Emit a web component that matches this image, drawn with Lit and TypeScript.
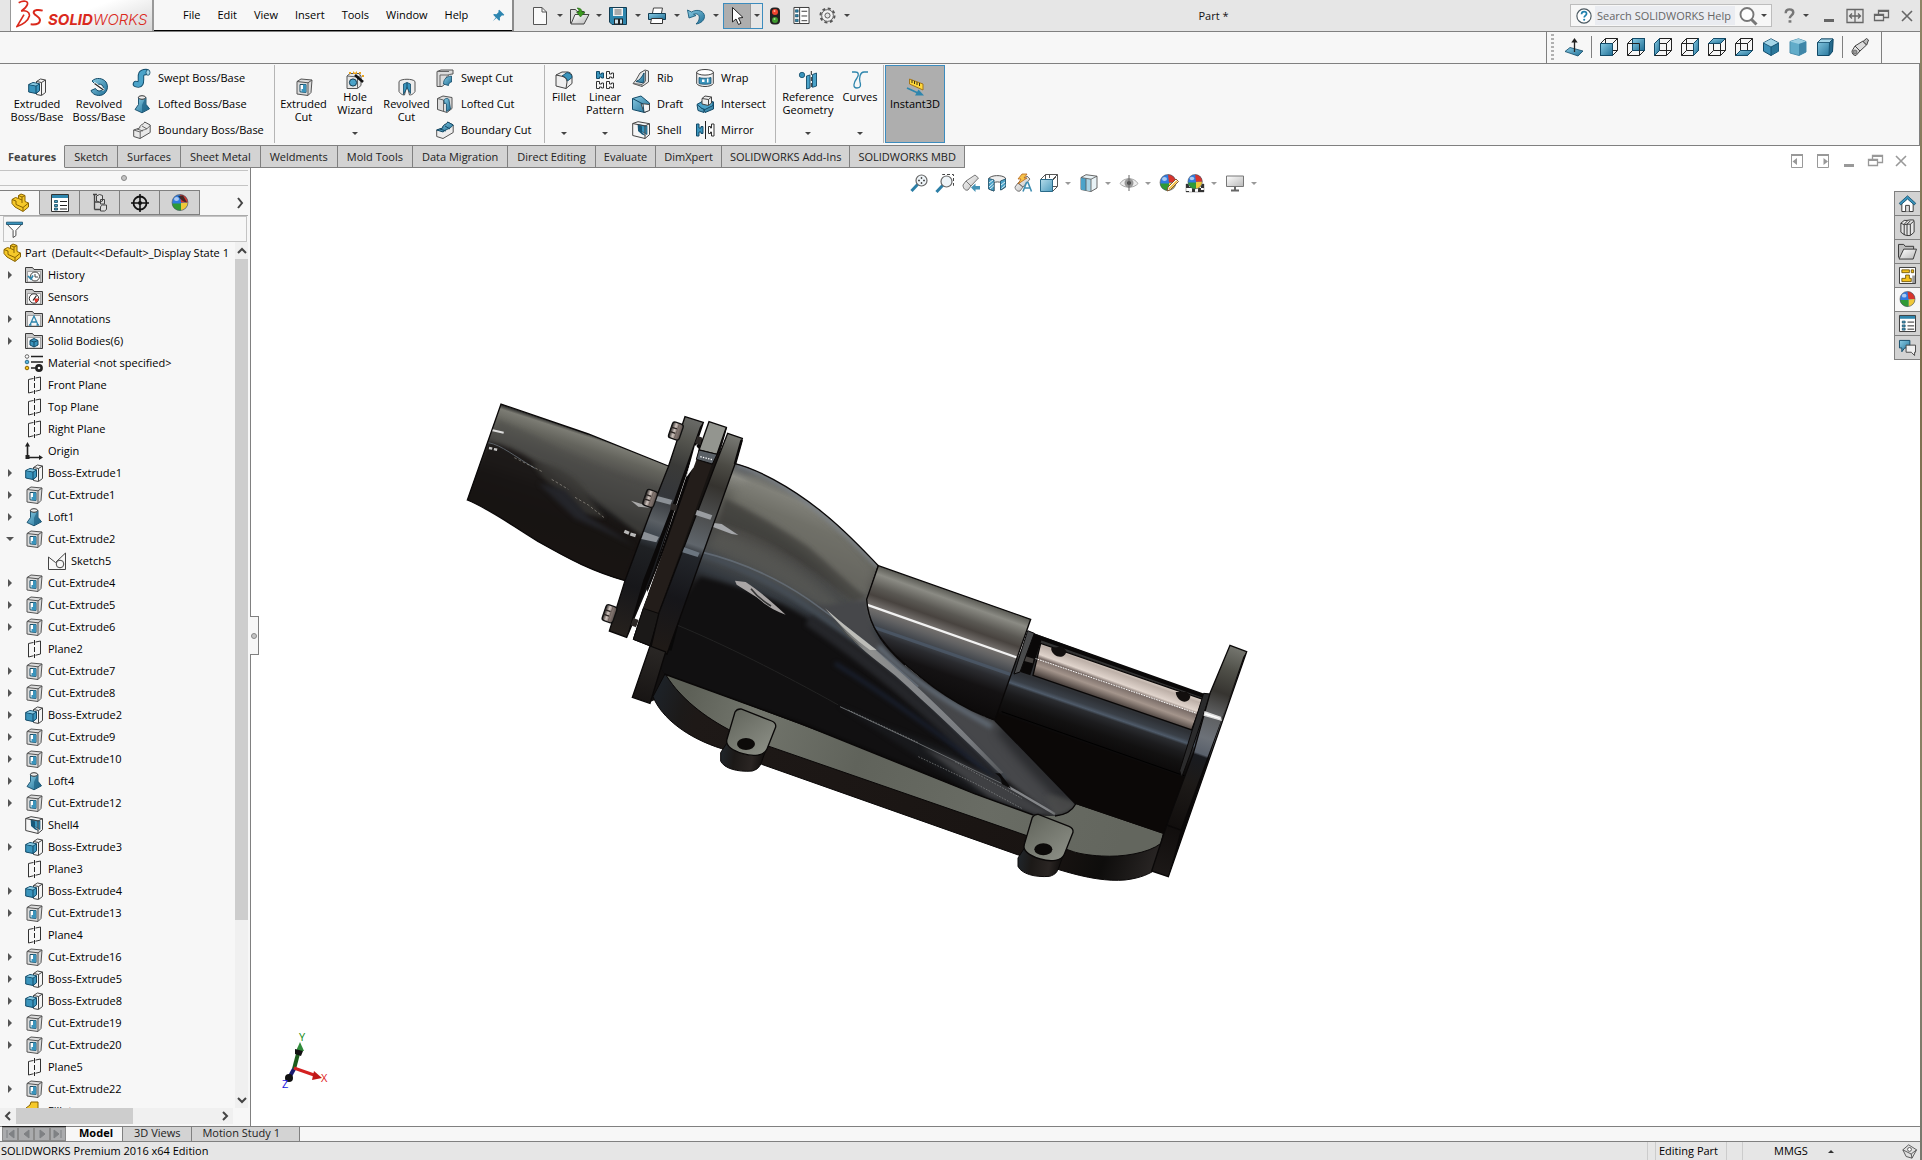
import { LitElement, html, svg, css, TemplateResult } from "lit";
import { customElement } from "lit/decorators.js";
import { classMap } from "lit/directives/class-map.js";

/* ---------- icons (18 x 18 grid) ---------- */

const cube = (face: unknown) => svg`
  <g fill="none" stroke="#222">
    <path d="M5.5 .5h12v12h-12zM.5 5.5h12v12h-12zM.5 5.5l5-5M12.5 5.5l5-5M.5 17.5l5-5M12.5 17.5l5-5"/>
  </g>${face}`;

const ball = svg`
  <circle cx="9" cy="8.5" r="8" fill="#2f7be0"/>
  <path d="M9 .5a8 8 0 0 1 8 8H10z" fill="#d8342c"/>
  <path d="M17 8.5a8 8 0 0 1-7 8V9z" fill="#f0c83a"/>
  <path d="M1 9.500h9v7a8 8 0 0 1-9-7z" fill="#2f9a36"/>
  <ellipse cx="5.500" cy="5" rx="2.500" ry="2" fill="#fff" opacity=".6"/>
  <circle cx="9" cy="8.500" r="8" fill="none" stroke="#555" stroke-width=".6"/>`;

const folder = svg`<path d="M.5 16.500v-15h7l1.500 2h8.500v13z" fill="#c9c9c9" stroke="#3c3c3c"/><path d="M2.500 16V5.500h13V16z" fill="#f6f6f6" stroke="#777" stroke-width=".6"/>`;
const lens = svg`<path d="M8 10l-6.500 7" stroke="#2b7ea6" stroke-width="3"/><circle cx="11.500" cy="6.500" r="5.500" fill="#eef4f8" stroke="#666" stroke-width="1.200"/>`;
const list = svg`<path d="M.5 .5h17v17H.5z" fill="#fff" stroke="#333"/><path d="M1 1h16v3H1z" fill="#2f86ad"/><path d="M3.500 6.500h3v2h-3zM3.500 10.500h3v2h-3zM3.500 14h3v2h-3z" fill="#4ba3c7" stroke="#134660" stroke-width=".8"/><path d="M9 7.500h7M9 11.500h7M9 15h7" stroke="#222"/>`;

const icons: Record<string, unknown> = {
  pin: svg`<path d="M10 1l7 7-1.500 1.200-1.600-.4-3 3 .2 3.400-1.200 1.200-3.800-3.800L1 17l4.200-5.200L1.600 8l1.300-1 3.300.1 3-3L8.700 2.300z" fill="#2e86b0"/>`,
  doc: svg`<path d="M2.500 .5h8.500l4.500 4.500v12.500h-13z" fill="#fafafa" stroke="#555"/><path d="M11 .5v4.500h4.500" fill="none" stroke="#555"/>`,
  open: svg`<path d="M.5 16.500v-14h5l1.500 2h7v3" fill="#ddd" stroke="#444"/><path d="M1 17L5 7.500h14L14 17z" fill="url(#w)" stroke="#444"/><path d="M7 1c4 0 5 2 5 4h3l-4.500 5L6.500 5h2.500C9 3 8.500 2 7 1z" fill="#3c9a1e" stroke="#1d5c10" stroke-width=".5"/>`,
  save: svg`<path d="M.5 .5h17v17H3l-2.500-2.500z" fill="#2f86ad" stroke="#123c52"/><path d="M4 1h10v8H4z" fill="#f2f2f2"/><path d="M5.500 3h7M5.500 5h7M5.500 7h7" stroke="#666"/><path d="M5 11.500h9v6H5z" fill="#222"/><path d="M6 12.500h3v4H6zM11 12.500h2v4h-2z" fill="#cfe4ee"/>`,
  print: svg`<path d="M4.500 6L5.500 1h9l-1 5" fill="#fff" stroke="#444"/><path d="M.5 6.500h17v6H.5z" fill="url(#b)" stroke="#123c52"/><path d="M3.500 11.500h11v5h-12z" fill="#fff" stroke="#333"/>`,
  undo: svg`<path d="M.5 3l1.500 8 7-2.500-2.500-1.300c4-1.200 6 .8 5.800 3.800-.2 3-1.800 4.500-3.300 6C14 16.500 17.500 13 17.500 9.500 17.500 4 10.500 1.500 4.500 5z" fill="url(#b)" stroke="#1b5c7d" stroke-width=".9"/>`,
  cursor: svg`<path d="M4.500 .5v14.500l3.500-3 2.500 5.500 2.500-1.200-2.500-5.300 4.500-.5z" fill="#fff" stroke="#222"/>`,
  lights: svg`<rect x="4" y=".5" width="10" height="17" rx="4" fill="#222"/><circle cx="9" cy="5" r="3" fill="#f0442e"/><circle cx="9" cy="13" r="3" fill="#3f9a2e"/><circle cx="8.500" cy="4" r="1" fill="#ffb09a"/><circle cx="8.500" cy="12" r="1" fill="#a6dc96"/>`,
  props: svg`<path d="M1 .5h16v17H1z" fill="#fff" stroke="#333"/><path d="M7 1v16" stroke="#333"/><path d="M2.500 3h3v2.500h-3zM2.500 8h3v2.500h-3zM2.500 13h3v2.500h-3z" fill="#2f86ad" stroke="#123c52" stroke-width=".6"/><path d="M9 4.500h6M9 9.500h6M9 14.500h6" stroke="#333"/>`,
  gear: svg`<circle cx="9" cy="9" r="7.500" fill="none" stroke="#555" stroke-width="2" stroke-dasharray="3.200 2.690"/><circle cx="9" cy="9" r="6.200" fill="#f2f2f2" stroke="#555"/><circle cx="9" cy="9" r="2.700" fill="#e6e6e6" stroke="#555"/>`,
  help: svg`<circle cx="9" cy="9" r="8" fill="#fff" stroke="#4c5a62" stroke-width="1.300"/><path d="M6.200 7c.1-2 1.300-2.900 2.900-2.900 1.700 0 2.800 1 2.800 2.400 0 2-2.700 2.300-2.700 4.200" fill="none" stroke="#2181ad" stroke-width="1.900"/><circle cx="9.200" cy="13.200" r="1.200" fill="#2181ad"/>`,
  mag: svg`<circle cx="8" cy="7.500" r="6.500" fill="#fff" stroke="#777" stroke-width="1.900"/><path d="M12.500 12.500l5 5" stroke="#777" stroke-width="3"/>`,
  qmark: svg`<path d="M5 6.500c0-2.800 1.700-4 4-4 2.500 0 4 1.300 4 3.400 0 2.800-3.700 3.200-3.700 6" fill="none" stroke="#777" stroke-width="2.600"/><path d="M8 14h3v2.600H8z" fill="#777"/>`,
  min: svg`<path d="M4 12h10v3H4z" fill="currentColor"/>`,
  span: svg`<path d="M1 2.500h16v13H1zM9 2.500v13M4 9h10M6 6.500L3.500 9 6 11.500M12 6.500L14.500 9 12 11.500" fill="none" stroke="currentColor" stroke-width="1.300"/>`,
  restore: svg`<path d="M6.500 7V3.500h10v7H12M2.500 7.500h9v6h-9z" fill="none" stroke="currentColor" stroke-width="1.300"/><path d="M2 7h10v2H2zM6 3h11v2H6z" fill="currentColor"/>`,
  close: svg`<path d="M4 4l10 10M14 4L4 14" stroke="currentColor" stroke-width="1.600"/>`,
  paneL: svg`<path d="M3.500 2.500h11v13h-11z" fill="none" stroke="currentColor"/><path d="M3 2h12v2H3zM9 6v7L4.500 9.500z" fill="currentColor"/>`,
  paneR: svg`<path d="M3.500 2.500h11v13h-11z" fill="none" stroke="currentColor"/><path d="M3 2h12v2H3zM9.500 6v7l4.500-3.500z" fill="currentColor"/>`,
  normal: svg`<path d="M0 13.500l5-4 13 3.500-5 5z" fill="url(#b)" stroke="#124a68" stroke-width=".8"/><path d="M9.500 14V3" stroke="#222" stroke-width="1.300"/><path d="M9.500 0l3.200 4.500H6.300z" fill="#222"/>`,
  vFront: cube(svg`<path d="M.5 5.500h12v12h-12z" fill="url(#b)" stroke="#124a68"/>`),
  vBack: cube(svg`<path d="M5.500 .5h12v12h-12z" fill="url(#b)" stroke="#124a68"/><path d="M5 5.500h7.500V13" fill="none" stroke="#222"/>`),
  vLeft: cube(svg`<path d="M.5 5.500l5-5v12l-5 5z" fill="url(#b)" stroke="#124a68"/>`),
  vRight: cube(svg`<path d="M12.500 5.500l5-5v12l-5 5z" fill="url(#b)" stroke="#124a68"/>`),
  vTop: cube(svg`<path d="M.5 5.500l5-5h12l-5 5z" fill="url(#b)" stroke="#124a68"/>`),
  vBottom: cube(svg`<path d="M.5 17.500l5-5h12l-5 5z" fill="url(#b)" stroke="#124a68"/>`),
  iso: svg`<path d="M9 .8l7.500 4v8.400L9 17.500l-7.500-4.300V4.800z" fill="#3a8fb7" stroke="#124a68"/><path d="M9 1l7.500 4L9 9 1.500 5z" fill="#a5d6e8"/><path d="M9 9l7.500-4v8.200L9 17.500z" fill="#2c7799"/><path d="M1.500 5L9 9l7.500-4M9 9v8.500" fill="none" stroke="#124a68" stroke-width=".8"/>`,
  tri: svg`<path d="M1 3.500L9.500 .8 17 3.500V14l-7 3.500-9-2.500z" fill="#62acc9" stroke="#4a8fae"/><path d="M1 3.500L9.500 .8 17 3.500l-7 2.500z" fill="#9ccfe2"/><path d="M10 6l7-2.500V14l-7 3.500z" fill="#3f86a8"/>`,
  dim: svg`<path d="M1.500 4.500L5 1h12l-.5 12.500L13 17.500H1.500z" fill="url(#b)" stroke="#124a68"/><path d="M1.500 4.500L5 1h12l-3.500 3.500z" fill="#a5d6e8" stroke="#124a68" stroke-width=".8"/><path d="M13.500 4.500L17 1l-.5 12.500-3.500 4z" fill="#24698c" stroke="#124a68" stroke-width=".8"/>`,
  scope: svg`<path d="M1 13l3-5 5 5-4 4.500c-3 0-4-2-4-4.500z" fill="url(#w)" stroke="#444"/><path d="M4 8l8-5 3.500 4L9 13z" fill="#ddd" stroke="#444"/><path d="M12 3.500l3.500-3 2 1.500-1.800 5z" fill="#bbb" stroke="#444"/><circle cx="4" cy="14" r="2" fill="#999" stroke="#444" stroke-width=".6"/>`,

  extBoss: svg`<path d="M8.500 3.500l4-2.500 5 1v12.500l-4 3-5-1z" fill="#f4f4f4" stroke="#444"/><path d="M13.500 17V4.500l4-2.500M8.500 3.500l5 1" fill="none" stroke="#444"/><path d="M.7 6.500L5 4.500l6.500 1.300v7L8 15.500 .7 14z" fill="#3a94bc" stroke="#124a68"/><path d="M.7 6.500L8 8v7.500M8 8l3.500-2.200" fill="none" stroke="#124a68"/><path d="M1.500 6.500L5 5l5.500 1L8 7.500z" fill="#8cc9e0"/>`,
  revBoss: svg`<path d="M2 3C6-1 13 0 16 4c3 5 1 11-4 13-5 1.500-10-1-11-4.500l4.500-2c1 2.500 4 3 6 2 2-1.200 2.200-4 .5-5.500-2-1.300-4-1-5.500.5z" fill="url(#b)" stroke="#124a68"/><path d="M4 5l10 7" stroke="#fff" stroke-width="2.500"/><path d="M4.500 5.500l9 6.500" stroke="#222" stroke-width="1.200"/>`,
  sweep: svg`<path d="M3 15c5 2 5-2 5-5s-1-7 5-7" fill="none" stroke="#124a68" stroke-width="6.500" stroke-linecap="round"/><path d="M3 15c5 2 5-2 5-5s-1-7 5-7" fill="none" stroke="#4ba3c9" stroke-width="4.700" stroke-linecap="round"/><ellipse cx="15" cy="3.500" rx="2" ry="2.800" fill="#a5d6e8" stroke="#124a68" stroke-width=".8"/>`,
  loft: svg`<path d="M5.500 2.500v7l-3.500 5 7 3.300 7.500-4-3.500-4.500V2.500z" fill="url(#b)" stroke="#124a68" stroke-width=".9"/><path d="M9 10v7.500l7-4-3.500-4.500V2.500z" fill="#1f6384" opacity=".7"/><ellipse cx="9" cy="2.500" rx="3.600" ry="1.800" fill="#eee" stroke="#333"/>`,
  boundary: svg`<path d="M.7 9l6-2c0-4 4-3 5-6l5.500 3v7.500L7 17.500.7 15.500z" fill="#e9e9e9" stroke="#555"/><path d="M.7 9l6.500 2c2-3 6-1 10-6.500M7.200 11v6.500M4 8l6 2M9 5l5 3" fill="none" stroke="#666"/>`,
  extCut: svg`<path d="M2 3.500L6 1l11 1-1 12.500-3 3L2 16z" fill="#dcdcdc" stroke="#555"/><path d="M2 3.500l11 1.300v12.500M13 4.800L17 2" fill="none" stroke="#555"/><path d="M5 6.500h6v8l-6-.7z" fill="#fff" stroke="#1b4b63"/><path d="M8 6.500h3v8l-4.500-.5V11H8z" fill="#3a94bc"/>`,
  hole: svg`<path d="M1 5l3-2.500h9l2 2.500v9.500l-3.500 3H1z" fill="#e6e6e6" stroke="#555"/><path d="M11.500 17.500V6L15 4.500M1 5l10.500 1" fill="none" stroke="#666"/><circle cx="7" cy="11.500" r="3.600" fill="#4ba3c9" stroke="#123c52"/><path d="M9 4l8 7" stroke="#111" stroke-width="2.600"/><path d="M3 1h2v2H3zM7 0l2 2 2-2v3H7zM13 1h2v2h-2zM16 4h2v2h-2z" fill="#e8a21c"/>`,
  revCut: svg`<path d="M1 3.500C3 .5 15 .5 17 3.500v10c-2 3.500-5 3.500-5.500 3.500L9 7l-2.500 10C6 17 3 17 1 13.500z" fill="#ededed" stroke="#555"/><path d="M5.500 6L9 4.500 12.500 6v9.500L9 9.500l-3.500 7z" fill="#3a94bc" stroke="#124a68" stroke-width=".8"/><path d="M9 4.500V10" stroke="#124a68"/>`,
  swCut: svg`<path d="M1 2.500L5 1h12v4c-6 0-8 4-8 10l-3 2.500H1z" fill="#dcdcdc" stroke="#555"/><path d="M1 2.500h12M4 17V6h9" fill="none" stroke="#666"/><path d="M7.500 15c0-5 3-7.500 8-8v6c-2 .5-3 1.500-3 3.500z" fill="url(#b)" stroke="#124a68" stroke-width=".8"/>`,
  loCut: svg`<path d="M1.500 3.500L7 1l9 1.500v11l-5 4-9.500-3z" fill="#dcdcdc" stroke="#555"/><path d="M1.500 3.500l6 1.500v11" fill="none" stroke="#666"/><path d="M8 5c1-2 5-2 5 0l1.500 9-4 2.500V9c-.5-1-1.500-1-2 0z" fill="url(#b)" stroke="#124a68" stroke-width=".8"/>`,
  boCut: svg`<path d="M.7 9l6-2c0-4 4-3 5-6l5.500 3v7.500L7 17.500.7 15.500z" fill="#eee" stroke="#555"/><path d="M.7 9l6-2c0-4 4-3 5-6l5.500 3c-4 5-8 4-10 7z" fill="url(#b)" stroke="#124a68"/><path d="M4 8l6 2M9 5l5 3" stroke="#124a68"/>`,
  fillet: svg`<path d="M1 4l6-3h6c3 .5 4 2.500 4 5v6.500l-6 5L1 15z" fill="#efefef" stroke="#444"/><path d="M7 5l5-3.500c3 .5 5 2.500 5 5L12.500 10C12 7.500 10 5.500 7 5z" fill="#3a94bc" stroke="#124a68" stroke-width=".9"/><path d="M1 4l6 1.300c3 .7 5 2.700 5 5.700l-1 6.500" fill="none" stroke="#444"/>`,
  linpat: svg`<g fill="none" stroke="#333"><path d="M10.500 .5h3v2.500h2V2h2v5h-2V6h-2v1.500h-3zM.5 10.500h3V13h2v-1h2v5h-2v-1h-2v1.500h-3zM10.500 10.500h3V13h2v-1h2v5h-2v-1h-2v1.500h-3z"/><path d="M.5 .5h3v2.500h2V2h2v5h-2V6h-2v1.500h-3z" fill="#3a94bc" stroke="#124a68"/></g>`,
  rib: svg`<path d="M8 4l5-3 3.500 1v11L10 17.500 1 14.500l3-3.500z" fill="#e6e6e6" stroke="#555"/><path d="M12 4v10l-8-1.500C8 11 10 8 12 4z" fill="url(#b)" stroke="#124a68"/><path d="M1 14.500l9 1V17.500M10 15.500L13.500 12V2" fill="none" stroke="#666"/>`,
  draft: svg`<path d="M.5 3.500L9 1l8.500 7v7l-5 2.500-12-3z" fill="url(#b)" stroke="#124a68"/><path d="M9 8.500l8.500 1v6l-5.500 2z" fill="#f4f4f4" stroke="#444"/><path d="M.5 3.500L11 9l1 8.500" fill="none" stroke="#124a68"/>`,
  shell: svg`<path d="M.7 2.500L6 .7l11.500 2v11L13 17.500.7 14.500z" fill="#f6f6f6" stroke="#444"/><path d="M6 3.500l9 1.500v8.500L9 10l-2.500-1z" fill="#3a94bc" stroke="#124a68" stroke-width=".7"/><path d="M6 3.500l4 2V11l4 4-4-1.500L6 10z" fill="#17597a"/><path d="M.7 2.500L13 5v12.500M13 5l4.500-2.300" fill="none" stroke="#444"/>`,
  wrap: svg`<path d="M.7 3v11.500c2 4 14.600 4 16.600 0V3" fill="#f2f2f2" stroke="#444"/><ellipse cx="9" cy="3.300" rx="8.300" ry="2.800" fill="#fff" stroke="#444"/><path d="M3 8.500c2 1 10 1 12 0v6c-2 1-10 1-12 0z" fill="#3a94bc" stroke="#124a68" stroke-width=".8"/><path d="M6 10.500h2.500V13H6zM11 9.500h1.500v4H11z" fill="#fff"/>`,
  intersect: svg`<path d="M1 9.500l4-1.500v5l3 1v3.500l-6-2zM8 14l8-4V7h1.500v7L9 17.500z" fill="url(#b)" stroke="#124a68"/><path d="M1 9.500l5-3 8 2 3-2v4l-8 4-3-1z" fill="#4ba3c9" stroke="#124a68"/><path d="M6 3.500L9 1l6.500 1v6l-3 2.500L6 9z" fill="#eee" stroke="#444"/><path d="M6 3.500l6.500 1V10M12.500 4.500l3-2.500" fill="none" stroke="#444"/>`,
  mirror: svg`<path d="M9.500 0v18" stroke="#222"/><path d="M.5 3h2.500v4h2V5.500h2v7h-2V11h-2v4H.5z" fill="#3a94bc" stroke="#124a68"/><path d="M18 3h-2.500v4h-1V5.500h-2v7h2V11h1v4H18z" fill="#fff" stroke="#333"/>`,
  refgeo: svg`<circle cx="3" cy="4" r="2.700" fill="#3a94bc" stroke="#124a68" stroke-width=".8"/><path d="M7.500 5l3.500-1v13l-3.500 1zM13.500 3.500L17.500 2v13l-4 1.300z" fill="#4ba3c9" stroke="#124a68" stroke-width=".9"/><path d="M12.300 0v18" stroke="#222" stroke-dasharray="4 2"/>`,
  curves: svg`<path d="M1 1h3c4 0 4 3 2 6-3 4-5 10 0 10 4 0 4-3 3-6C8 7 9 1 13 1h4" fill="none" stroke="#2f86ad" stroke-width="1.300"/>`,
  instant: svg`<path d="M3.500 1l13.500 5v6L3.500 6z" fill="#ffd83a" stroke="#a5761a"/><path d="M6 2v3M8.500 3v3M11 4v3M13.500 5v3" stroke="#3b3213"/><path d="M1 10l11 5" stroke="#2f86ad" stroke-width="1.800"/><path d="M12.500 11.500l5.500 6h-9z" fill="#2f86ad"/>`,

  zoomFit: svg`${lens}<path d="M11.500 3v2M11.500 8v2M8 6.500h2M13 6.500h2" stroke="#555" stroke-width="1.400"/>`,
  zoomArea: svg`<path d="M6.500 1v-.5h11v11H16" fill="none" stroke="#444" stroke-dasharray="3 2"/><g transform="translate(-1 1)">${lens}</g>`,
  prevView: svg`<path d="M1 11l3-4 5 5-3 4c-3 1-5-2-5-5zM4 7l9-6 3.500 3L9 12z" fill="url(#w)" stroke="#777"/><path d="M9 13.500l4.500-4v2.500H18v3.500h-4.500V18z" fill="#4492b5"/>`,
  section: svg`<path d="M.7 4.500C3 1 14 .5 17.500 4v9L13 16V9C12 7.500 7 7.500 6 9v8L.7 15z" fill="#eee" stroke="#555"/><path d="M.7 4.500l5.300 1.500V17L.7 15zM12.500 7l5-2v8l-5 3z" fill="#4ba3c9" stroke="#2a5f79"/><path d="M1 9l4-3M1 13l4.500-4M2 15l4-3.500M13 11l4-3M13.500 14.500l4-3.500" stroke="#fff" stroke-width=".8"/>`,
  dynAnn: svg`<path d="M1 13l3-4 5 4-3 4c-3 1-5-2-5-4zM4 9l9-7 3 3-7 8z" fill="url(#w)" stroke="#777"/><path d="M8 0h5L10 4h3L4 10l3-5H4z" fill="#f7c34a" stroke="#b5651d" stroke-width=".8"/><path d="M9 17.500l3.500-9h1.500l3.500 9M10.500 14h5.500" fill="none" stroke="#3f8fb3" stroke-width="1.600"/>`,
  viewOri: svg`<path d="M5.500 .5h12v12h-12zM.5 5.500l5-5M12.500 17.500l5-5M12.500 5.500l5-5M9.500 1v3M13 6l3-3" fill="none" stroke="#555"/><path d="M.5 5.500h12v12H.5z" fill="url(#b2)" stroke="#2a6b8a"/>`,
  dispStyle: svg`<path d="M1 3.500L6 .7l11 1.500V14l-6 3.500L1 15.500z" fill="#e8f2f6" stroke="#666"/><path d="M1 3.500l5 1v12L1 15.500z" fill="#4ba3c9"/><path d="M6 4.500l5 .7v12l-5-1z" fill="#a9d3e3"/><path d="M1 3.500l10 1.700L17 2.200M11 5.200v12.300M6 4.500v12" fill="none" stroke="#555" stroke-width=".8"/>`,
  eye: svg`<path d="M0 9.500C4 3 14 3 18 9.500c-4 5-14 5-18 0z" fill="#eee" stroke="#aaa"/><circle cx="9" cy="9" r="4.500" fill="#999"/><circle cx="9" cy="9" r="2" fill="#444"/><path d="M9 1v16" stroke="#666"/>`,
  appear: svg`<g transform="translate(-1 0)">${ball}</g><path d="M7 17l1-4 8-8 2.500 2.500-8 8z" fill="#fff" stroke="#7a4a1a" stroke-width=".9"/><path d="M9 15l8-8" stroke="#f0b92c" stroke-width="1.600"/>`,
  scene: svg`<path d="M0 10h18v8H0z" fill="#fff" stroke="#888" stroke-width=".6"/><path d="M0 10h3v4H0zM6 14h3v4H6zM12 14h3v4h-3zM15 10h3v4h-3zM3 14h3v-1H3zM0 17h3v1H0zM15 16h3v2h-3z" fill="#333"/><g transform="translate(1 0) scale(.9)">${ball}</g>`,
  monitor: svg`<path d="M.5 2h17v10.500H.5z" fill="url(#w)" stroke="#777"/><path d="M9 12.500V16M5 16.500h8" stroke="#666" stroke-width="2"/>`,

  home: svg`<path d="M3 9v8.500h12V9L9 3.500z" fill="#fff" stroke="#333"/><path d="M9 .8l8.800 8-1.600 1.700L9 4.300 1.800 10.500.2 8.800z" fill="#3a94bc" stroke="#124a68" stroke-width=".8"/><path d="M7 17.500V11h4v6.500" fill="#ddd" stroke="#333"/>`,
  library: svg`<path d="M2 4.500l3.500-3h3l3-.5h4l.5 2v11l-4 3.500H8l-2.500-1L2 14z" fill="#e6e6e6" stroke="#333"/><path d="M2 4.500l3.500 1.500v11M5.500 5.500L9 2M8.500 17.500v-12L12 2M12 17V5.500l3.500-3M5.500 6l3-.5 3.500 0" fill="none" stroke="#333"/>`,
  folderO: svg`<path d="M-.5 15.500v-14h5.500l1.500 2h9v3" fill="#bdbdbd" stroke="#333"/><path d="M0 17L5 6.500h13.500L15 17z" fill="url(#w)" stroke="#333"/>`,
  palette: svg`<path d="M.5 .5h17v17H.5z" fill="#fff" stroke="#333"/><path d="M3 3h8v3H3zM13 3h2.500v3H13zM7 8.500h4V12h2v3.500H3V12h4z" fill="#f5c21c" stroke="#5a4300" stroke-width=".8"/><path d="M14 9h3v8h-3z" fill="#999"/>`,
  ball,
  list,
  chat: svg`<path d="M.5 1.500h11v8H6l-3 4v-4H.5z" fill="url(#b)" stroke="#124a68"/><path d="M7.500 6.500h10V14h-1v3.500L13 14H7.500z" fill="#f0f0f0" stroke="#444"/>`,

  part: svg`<path d="M1 5.500l3.500-2 3 1V1.500L10 0l4 1.500v6l3.500 1.500V13L12 17.500 4 13 1 9.500z" fill="#f6c92a" stroke="#8a6400"/><path d="M1 5.500L5 7v3.500l7 3V17M12 13.500L17.500 9M7.500 4.500l3.500 1.500V9M7.500 1.500L11 3v3M11 3l3-1.500" fill="none" stroke="#8a6400"/>`,
  config: svg`<path d="M3.500 .5v15M2 .5h4M3.500 8h6M3.500 15.500h6" fill="none" stroke="#444" stroke-width="1.300"/><path d="M5.500 2l3-1.500 3 1V7l-3 1-3-1zM9.500 5.500h4V10h-4zM9.500 12.500l2-1.500h4v4.500l-2 1.500h-4z" fill="#ddd" stroke="#444"/>`,
  target: svg`<circle cx="9" cy="9" r="6.500" fill="none" stroke="#111" stroke-width="1.800"/><path d="M9 0v18M0 9h18" stroke="#111" stroke-width="1.600"/><circle cx="9" cy="9" r="2" fill="#111"/>`,
  ballPart: svg`${ball}<path d="M7 2l5-.5 4 7c-3-.5-6-2-9-6.500z" fill="#222" opacity=".8"/>`,
  funnel: svg`<path d="M.8 3l6.700 7v7.500l3-2V10l6.700-7z" fill="#fff" stroke="#444"/><path d="M.5 1.200h17v2.500H.5z" fill="#3a94bc" stroke="#124a68" stroke-width=".8"/>`,
  fHistory: svg`${folder}<circle cx="10" cy="10.500" r="4.500" fill="#fff" stroke="#444"/><path d="M10 8v3h3" fill="none" stroke="#444"/><path d="M3 10l3 3 2-3.500" fill="none" stroke="#2f86ad" stroke-width="1.700"/>`,
  fSensors: svg`${folder}<circle cx="9" cy="10.500" r="4.700" fill="#fff" stroke="#333"/><path d="M9 10.500h4.500a4.500 4.500 0 0 1-3 4.200z" fill="#e5352b"/><path d="M8 12.500l3.500-5" stroke="#222" stroke-width="1.200"/>`,
  fAnn: svg`${folder}<path d="M5 15l4-9 4 9M6.500 12h5M4 15h2.500M11.500 15H14" fill="none" stroke="#2f86ad" stroke-width="1.300"/>`,
  fSolid: svg`${folder}<path d="M5 8.500L9 6.500l4 2v4.500l-4 2-4-2z" fill="#3a94bc" stroke="#124a68"/><path d="M5 8.500l4 1.500 4-1.500M9 10v5" fill="none" stroke="#124a68"/>`,
  material: svg`<path d="M6 2.500h12M6 8h12M6 14h5" stroke="#222" stroke-width="1.500"/><circle cx="2" cy="2.500" r="1.800" fill="#fff" stroke="#666"/><circle cx="2" cy="8" r="1.800" fill="#58b4dc" stroke="#2b6f90"/><circle cx="2" cy="14" r="1.800" fill="#f5c21c" stroke="#8a6400"/><circle cx="14" cy="14" r="2.600" fill="#fff" stroke="#222" stroke-width="2.600"/>`,
  plane: svg`<path d="M3.500 3.500l12-2.500v13l-12 3z" fill="none" stroke="#333"/><path d="M9.500 0v18" stroke="#f7f7f7" stroke-width="2"/><path d="M9.500 0v18" stroke="#222" stroke-dasharray="5 2"/>`,
  origin: svg`<path d="M2.500 3v12.500H15" fill="none" stroke="#222" stroke-width="1.600"/><path d="M2.500 0L5 4.500H0zM18 15.500L14 13v5zM.5 13h4v4h-4z" fill="#222"/>`,
  sketch: svg`<path d="M.5 17.500V5l7 5.500L17.500 1v16.500z" fill="none" stroke="#444"/><circle cx="12" cy="12" r="3.800" fill="#f7f7f7" stroke="#444"/>`,
  fold: svg`<path d="M1 6l4-3 1-3h7v7l4 2v6l-6 3-9-4z" fill="#f6c92a" stroke="#8a6400"/>`,
  tag: svg`<path d="M1 7l7-6 9.500 6-5.500 10-7-2z" fill="#e0e0e0" stroke="#444"/><path d="M1 7l10 5 6.500-5M11 12l1 5" fill="none" stroke="#444"/><circle cx="9" cy="6.500" r="2.300" fill="#fff" stroke="#444"/>`,
};

const icon = (name: string, size = 18): TemplateResult => html`<svg
  class="ic" width=${size} height=${size} viewBox="0 0 18 18" aria-hidden="true">
  <defs>
    <linearGradient id="b" x1="0" y1="0" x2="1" y2="1"><stop offset="0" stop-color="#8accE4"/><stop offset="1" stop-color="#1f6f96"/></linearGradient>
    <linearGradient id="b2" x1="0" y1="0" x2="1" y2="1"><stop offset="0" stop-color="#b5dcea"/><stop offset="1" stop-color="#4f9dbf"/></linearGradient>
    <linearGradient id="w" x1="0" y1="0" x2="1" y2="1"><stop offset="0" stop-color="#fff"/><stop offset="1" stop-color="#b9b9b9"/></linearGradient>
  </defs>${icons[name]}</svg>`;

const base = css`
  :host, * { box-sizing: border-box; }
  button, input, a {
    font: inherit; color: inherit; background: none; border: 0; padding: 0; margin: 0; text-decoration: none;
  }
  button { display: flex; align-items: center; justify-content: center; }
  .ic { display: block; flex: none; overflow: visible; }
  .caret { width: 0; height: 0; border: 3px solid transparent; border-top-color: #444; border-bottom: 0; flex: none; }
`;

/* ---------- title bar ---------- */

@customElement("title-bar")
export class TitleBar extends LitElement {
  static styles = [base, css`
    :host { display: flex; height: 32px; background: #e6e6e6; border-bottom: 1px solid #808080; }
    .menu-area { margin-left: 10px; display: flex; background: #f7f7f7; border-right: 2px solid #8c8c8c; width: 504px; }
    .brand { display: flex; align-items: flex-end; width: 144px; flex: none; padding: 0 0 3px 5px; color: #da291c;
      background: linear-gradient(160deg, #fff 45%, #d6d6d6); border: solid #999; border-width: 0 2px 0 1px; white-space: nowrap; }
    .brand .word { font: italic 300 15px/16px Inter, sans-serif; margin-left: 5px; }
    .brand b { font-weight: 700; }
    nav { display: flex; align-items: center; gap: 17px; padding-left: 29px; flex: 1; color: #000; border-bottom: 1px solid #000; }
    nav .pin { margin-left: 7px; }
    .tools { display: flex; align-items: center; margin-left: 17px; }
    .tool { width: 18px; height: 26px; }
    .drop { width: 21px; height: 26px; }
    .select { display: flex; border: 1px solid #3c8cbe; margin-left: -3px; height: 26px; }
    .select .tool { background: #aeaeae; width: 26px; height: 24px; }
    .select .drop { width: 12px; height: 24px; border-left: 1px solid #999; background: #e6e6e6; }
    .tools .near { margin-left: 3px; }
    .tools .gap { margin-left: 8px; }
    h1 { flex: 1; font: inherit; text-align: center; margin: 0; line-height: 32px; }
    .search { display: flex; align-items: center; width: 202px; height: 23px; margin-top: 4px; border: 1px solid #bdbdbd; background: #f7f7f7; padding-left: 5px; }
    .search input { flex: 1; min-width: 0; height: 19px; background: #eaecf1; margin: 0 4px 0 3px; padding-left: 2px; color: #555; outline: 0; }
    .search input::placeholder { color: #666; opacity: 1; }
    .search .drop { width: 14px; }
    .win { display: flex; align-items: center; color: #666; padding: 0 4px 0 8px; gap: 8px; }
    .win button { width: 18px; height: 22px; }
    .win button.drop { width: 12px; margin-left: -6px; }
  `];

  private menus = ["File", "Edit", "View", "Insert", "Tools", "Window", "Help"];

  private drop(label: string) {
    return html`<button class="drop" aria-label=${label}><span class="caret"></span></button>`;
  }

  render() {
    const quick = [["doc", "New"], ["open", "Open"], ["save", "Save"], ["print", "Print"], ["undo", "Undo"]];
    return html`
      <div class="menu-area">
        <div class="brand">
          <svg width="27" height="28" viewBox="0 0 81 84" aria-hidden="true" fill="none" stroke="#da291c">
            <path d="M8 8C22 1 38 2 34 14 31 22 24 28 16 33" stroke-width="5"/>
            <path d="M15 33C30 30 42 36 40 48 37 62 20 74 3 79L24 44" stroke-width="5"/>
            <path d="M80 32C68 28 54 29 53 37c-1 9 20 12 19 24-1 11-16 13-28 12" stroke-width="6"/>
          </svg>
          <span class="word"><b>SOLID</b>WORKS</span>
        </div>
        <nav aria-label="Main menu">
          ${this.menus.map((m) => html`<a href="#">${m}</a>`)}
          <button class="pin" aria-label="Pin menu">${icon("pin", 13)}</button>
        </nav>
      </div>
      <div class="tools">
        ${quick.map(([i, l]) => html`<button class="tool" aria-label=${l}>${icon(i)}</button>${this.drop(l + " options")}`)}
        <div class="select">
          <button class="tool" aria-label="Select">${icon("cursor")}</button>${this.drop("Select options")}
        </div>
        <button class="tool near" aria-label="Rebuild">${icon("lights")}</button>
        <button class="tool gap" aria-label="File properties">${icon("props", 17)}</button>
        <button class="tool gap" aria-label="Options">${icon("gear", 17)}</button>${this.drop("Option list")}
      </div>
      <h1>Part *</h1>
      <div class="search">
        ${icon("help", 16)}
        <input type="text" aria-label="Search SOLIDWORKS Help" placeholder="Search SOLIDWORKS Help" />
        <button aria-label="Search">${icon("mag")}</button>${this.drop("Search options")}
      </div>
      <div class="win">
        <button aria-label="Help">${icon("qmark", 17)}</button>${this.drop("Help options")}
        <button aria-label="Minimize">${icon("min")}</button>
        <button aria-label="Span displays">${icon("span")}</button>
        <button aria-label="Restore">${icon("restore")}</button>
        <button aria-label="Close">${icon("close")}</button>
      </div>`;
  }
}

/* ---------- standard views bar, ribbon, ribbon tabs ---------- */

interface Big { icon: string; lines: string[]; cls: string; drop?: boolean; active?: boolean; }
interface Group { big: Big[]; cols: { cls: string; items: [string, string][] }[]; }

const groups: Group[] = [
  {
    big: [{ icon: "extBoss", lines: ["Extruded", "Boss/Base"], cls: "boss" }, { icon: "revBoss", lines: ["Revolved", "Boss/Base"], cls: "boss" }],
    cols: [{ cls: "c-boss", items: [["sweep", "Swept Boss/Base"], ["loft", "Lofted Boss/Base"], ["boundary", "Boundary Boss/Base"]] }],
  },
  {
    big: [{ icon: "extCut", lines: ["Extruded", "Cut"], cls: "cut" }, { icon: "hole", lines: ["Hole", "Wizard"], cls: "hole", drop: true }, { icon: "revCut", lines: ["Revolved", "Cut"], cls: "cut" }],
    cols: [{ cls: "c-cut", items: [["swCut", "Swept Cut"], ["loCut", "Lofted Cut"], ["boCut", "Boundary Cut"]] }],
  },
  {
    big: [{ icon: "fillet", lines: ["Fillet"], cls: "fillet", drop: true }, { icon: "linpat", lines: ["Linear", "Pattern"], cls: "pattern", drop: true }],
    cols: [
      { cls: "c-rib", items: [["rib", "Rib"], ["draft", "Draft"], ["shell", "Shell"]] },
      { cls: "c-wrap", items: [["wrap", "Wrap"], ["intersect", "Intersect"], ["mirror", "Mirror"]] },
    ],
  },
  { big: [{ icon: "refgeo", lines: ["Reference", "Geometry"], cls: "wide", drop: true }, { icon: "curves", lines: ["Curves"], cls: "curve", drop: true }], cols: [] },
];

@customElement("command-manager")
export class CommandManager extends LitElement {
  static styles = [base, css`
    :host { display: block; }
    .views { display: flex; justify-content: flex-end; height: 32px; background: #f7f7f7; border-bottom: 1px solid #808080; padding-right: 38px; }
    .bar { display: flex; align-items: center; gap: 9px; border: solid #808080; border-width: 0 1px; padding: 0 12px 1px 4px; }
    .grip { width: 3px; height: 26px; background: repeating-linear-gradient(#b0b0b0 0 2px, transparent 2px 4px); margin-right: 2px; }
    .vsep { width: 1px; height: 22px; background: #808080; margin: 0 -1px; }
    .bar button { width: 18px; height: 26px; }
    .ribbon { display: flex; height: 82px; background: #f7f7f7; border-bottom: 1px solid #808080; border-right: 1px solid #808080; padding: 1px 0 2px 6px; color: #000; }
    .group { display: flex; border-right: 1px solid #b5b5b5; padding-right: 1px; margin-right: 2px; }
    .big { position: relative; flex-direction: column; justify-content: flex-start; padding-top: 13px; line-height: 13px; }
    .big .ic { margin-bottom: 1px; }
    .big.drop { padding-top: 6px; }
    .big.drop .caret { position: absolute; top: 67px; left: calc(50% - 3px); }
    .active { background: #aeaeae; border: 1px solid #3c8cbe; margin-left: -1px; padding-top: 12px; }
    .boss { width: 62px; } .cut { width: 53px; } .hole { width: 50px; } .fillet { width: 34px; } .pattern { width: 48px; } .wide { width: 60px; } .curve { width: 44px; }
    .col { display: flex; flex-direction: column; }
    .col button { height: 26px; gap: 7px; justify-content: flex-start; padding-left: 3px; white-space: nowrap; }
    .c-boss { width: 143px; } .c-cut { width: 110px; } .c-rib { width: 64px; } .c-wrap { width: 81px; }
    .tabs { display: flex; background: #fff; height: 22px; justify-content: space-between; }
    .tablist { display: flex; margin-top: -1px; }
    .tab { height: 23px; background: #d3d3d3; border: 1px solid #808080; border-left: 0; padding: 0 9px; color: #222; white-space: nowrap; }
    .tab:nth-child(n + 9) { padding: 0 8px; }
    .tab.on { background: #f7f7f7; border-top-color: #f7f7f7; border-bottom-color: #f7f7f7; font-weight: bold; color: #444; padding: 0 8px; }
    .doc { display: flex; gap: 8px; color: #999; padding: 6px 10px 0 0; }
    .doc button { width: 18px; height: 18px; }
  `];

  private tabs = ["Features", "Sketch", "Surfaces", "Sheet Metal", "Weldments", "Mold Tools", "Data Migration", "Direct Editing", "Evaluate", "DimXpert", "SOLIDWORKS Add-Ins", "SOLIDWORKS MBD"];
  private views = [["vFront", "Front"], ["vBack", "Back"], ["vLeft", "Left"], ["vRight", "Right"], ["vTop", "Top"], ["vBottom", "Bottom"], ["iso", "Isometric"], ["tri", "Trimetric"], ["dim", "Dimetric"]];

  private big(b: Big) {
    return html`<button class=${classMap({ big: true, [b.cls]: true, drop: !!b.drop, active: !!b.active })}>
      ${icon(b.icon)}${b.lines.map((l) => html`<span>${l}</span>`)}${b.drop ? html`<i class="caret"></i>` : ""}
    </button>`;
  }

  render() {
    const docs = [["paneL", "Show left pane"], ["paneR", "Show right pane"], ["min", "Minimize document"], ["restore", "Restore document"], ["close", "Close document"]];
    return html`
      <div class="views"><div class="bar">
        <span class="grip"></span>
        <button aria-label="Normal to">${icon("normal")}</button>
        <span class="vsep"></span>
        ${this.views.map(([i, l]) => html`<button aria-label=${l}>${icon(i)}</button>`)}
        <span class="vsep"></span>
        <button aria-label="View selector">${icon("scope")}</button>
      </div></div>
      <div class="ribbon">
        ${groups.map((g) => html`<div class="group">
          ${g.big.map((b) => this.big(b))}
          ${g.cols.map((c) => html`<div class="col ${c.cls}">${c.items.map(([i, l]) => html`<button>${icon(i)}<span>${l}</span></button>`)}</div>`)}
        </div>`)}
        ${this.big({ icon: "instant", lines: ["Instant3D"], cls: "wide", active: true })}
      </div>
      <div class="tabs">
        <div class="tablist" role="tablist">
          ${this.tabs.map((t, i) => html`<button role="tab" class=${classMap({ tab: true, on: i === 0 })}>${t}</button>`)}
        </div>
        <div class="doc">${docs.map(([i, l]) => html`<button aria-label=${l}>${icon(i)}</button>`)}</div>
      </div>`;
  }
}

/* ---------- feature tree ---------- */

type Node = [icon: string, label: string, state?: "closed" | "open" | "child"];

const nodes: Node[] = [
  ["fHistory", "History", "closed"], ["fSensors", "Sensors"], ["fAnn", "Annotations", "closed"], ["fSolid", "Solid Bodies(6)", "closed"],
  ["material", "Material <not specified>"], ["plane", "Front Plane"], ["plane", "Top Plane"], ["plane", "Right Plane"], ["origin", "Origin"],
  ["extBoss", "Boss-Extrude1", "closed"], ["extCut", "Cut-Extrude1", "closed"], ["loft", "Loft1", "closed"], ["extCut", "Cut-Extrude2", "open"],
  ["sketch", "Sketch5", "child"], ["extCut", "Cut-Extrude4", "closed"], ["extCut", "Cut-Extrude5", "closed"], ["extCut", "Cut-Extrude6", "closed"],
  ["plane", "Plane2"], ["extCut", "Cut-Extrude7", "closed"], ["extCut", "Cut-Extrude8", "closed"], ["extBoss", "Boss-Extrude2", "closed"],
  ["extCut", "Cut-Extrude9", "closed"], ["extCut", "Cut-Extrude10", "closed"], ["loft", "Loft4", "closed"], ["extCut", "Cut-Extrude12", "closed"],
  ["shell", "Shell4"], ["extBoss", "Boss-Extrude3", "closed"], ["plane", "Plane3"], ["extBoss", "Boss-Extrude4", "closed"],
  ["extCut", "Cut-Extrude13", "closed"], ["plane", "Plane4"], ["extCut", "Cut-Extrude16", "closed"], ["extBoss", "Boss-Extrude5", "closed"],
  ["extBoss", "Boss-Extrude8", "closed"], ["extCut", "Cut-Extrude19", "closed"], ["extCut", "Cut-Extrude20", "closed"], ["plane", "Plane5"],
  ["extCut", "Cut-Extrude22", "closed"], ["fold", "Fillet"],
];

@customElement("feature-tree")
export class FeatureTree extends LitElement {
  static styles = [base, css`
    :host { display: flex; flex-direction: column; width: 251px; flex: none; background: #f7f7f7; border-right: 1px solid #808080; min-height: 0; color: #000; }
    .dot { width: 6px; height: 6px; border-radius: 50%; background: #c4c4c4; border: 1px solid #888; }
    .grip { display: flex; align-items: center; justify-content: center; height: 16px; border: solid #c4c4c4; border-width: 1px 0; margin: 2px 2px 4px 0; flex: none; }
    .tabs { display: flex; height: 26px; border-bottom: 1px solid #aaa; margin-right: 2px; flex: none; }
    .tabs button { width: 40px; background: #d3d3d3; border: 1px solid #808080; border-left: 0; }
    .tabs .on { background: #f7f7f7; border-bottom-color: #f7f7f7; }
    .tabs .more { background: none; border: 0; margin-left: auto; width: 16px; color: #444; }
    .filter { display: flex; align-items: center; height: 26px; border: 1px solid #c4c4c4; margin: 0 3px; padding-left: 2px; flex: none; }
    .filter input { flex: 1; outline: 0; min-width: 0; margin-left: 4px; }
    .body { display: grid; grid-template-columns: minmax(0, 1fr) 13px; flex: 1; min-height: 0; margin-right: 2px; }
    ul { list-style: none; margin: 0; padding: 0; overflow: hidden; }
    li { display: flex; align-items: center; height: 22px; padding-left: 8px; white-space: nowrap; }
    li .twist { width: 17px; height: 22px; justify-content: flex-start; flex: none; }
    li .ic { margin-right: 5px; }
    li.root { padding-left: 3px; }
    li.root .ic { margin-right: 4px; }
    li.child { padding-left: 31px; }
    .right { width: 0; height: 0; border: 4px solid transparent; border-left-color: #555; border-right: 0; }
    .down { width: 0; height: 0; border: 4px solid transparent; border-top-color: #555; border-bottom: 0; margin-left: -2px; }
    .vbar { display: flex; flex-direction: column; background: #f0f0f0; }
    .vbar button { height: 17px; color: #444; }
    .vthumb { background: #cdcdcd; flex: 662; }
    .vrest { flex: 171; }
    .hbar { display: flex; height: 16px; background: #f0f0f0; margin-right: 17px; flex: none; color: #444; margin-bottom: 2px; }
    .hbar button { width: 16px; }
    .hthumb { background: #cdcdcd; flex: 118; }
    .hrest { flex: 84; }
  `];

  private chev(d: string) {
    return html`<svg class="ic" width="10" height="10" viewBox="0 0 10 10" aria-hidden="true"><path d=${d} fill="none" stroke="currentColor" stroke-width="2"/></svg>`;
  }

  render() {
    const tabs = [["part", "FeatureManager"], ["list", "PropertyManager"], ["config", "ConfigurationManager"], ["target", "DimXpertManager"], ["ballPart", "DisplayManager"]];
    return html`
      <div class="grip"><span class="dot"></span></div>
      <div class="tabs">
        ${tabs.map(([i, l], n) => html`<button class=${n === 0 ? "on" : ""} aria-label=${l}>${icon(i)}</button>`)}
        <button class="more" aria-label="More tabs">${this.chev("M3 0l4 5-4 5")}</button>
      </div>
      <label class="filter">${icon("funnel", 17)}<input type="text" aria-label="Filter" /></label>
      <div class="body">
        <ul>
          <li class="root">${icon("part")}<span>Part&nbsp; (Default&lt;&lt;Default&gt;_Display State 1</span></li>
          ${nodes.map(([i, label, s]) => html`<li class=${s === "child" ? "child" : ""}>
            ${s === "closed" || s === "open"
              ? html`<button class="twist" aria-label="Toggle ${label}"><span class=${s === "open" ? "down" : "right"}></span></button>`
              : html`<span class="twist"></span>`}
            ${icon(i)}<span>${label}</span></li>`)}
        </ul>
        <div class="vbar">
          <button aria-label="Scroll up">${this.chev("M1 7l4-4 4 4")}</button>
          <div class="vthumb"></div><div class="vrest"></div>
          <button aria-label="Scroll down">${this.chev("M1 3l4 4 4-4")}</button>
        </div>
      </div>
      <div class="hbar">
        <button aria-label="Scroll left">${this.chev("M7 1L3 5l4 4")}</button>
        <div class="hthumb"></div><div class="hrest"></div>
        <button aria-label="Scroll right">${this.chev("M3 1l4 4-4 4")}</button>
      </div>`;
  }
}

/* ---------- graphics area ---------- */

const stops = (s: string) =>
  s.split(" ").map((p) => { const [o, c] = p.split(":"); return svg`<stop offset=${o} stop-color=${c}></stop>`; });
const grad = (id: string, x1: number, y1: number, x2: number, y2: number, s: string) =>
  svg`<linearGradient id=${id} gradientUnits="userSpaceOnUse" x1=${x1} y1=${y1} x2=${x2} y2=${y2}>${stops(s)}</linearGradient>`;

const ear = (dx: number, dy: number) => svg`<g transform="translate(${dx} ${dy})">
  <path d="M815 1060l-18 28v25c10 22 50 34 95 30 18-6 22-12 28-28l18-50z" fill="url(#earSide)" stroke="#0a0808" stroke-width="3"/>
  <path d="M840 966q6-10 18-9l92 36q14 6 12 18l-26 66c-8 20-40 24-72 14-32-10-54-24-48-44z" fill="url(#earTop)" stroke="#0a0808" stroke-width="4"/>
  <ellipse cx="873" cy="1062" rx="27" ry="18" fill="#0c0a09"/>
</g>`;

const bolt = (x: number, y: number) => svg`<g transform="translate(${x} ${y}) rotate(19)">
  <rect x="-16" y="-24" width="34" height="50" rx="8" fill="url(#bolt)" stroke="#111" stroke-width="4"/>
  <path d="M-16 -6h18M-16 8h18" stroke="#2a2422" stroke-width="4"/><path d="M4 -22v46" stroke="#6e625d" stroke-width="3"/></g>`;

const model = svg`
  <defs>
    ${grad("pipe", 330, 105, 225, 430, "0:#222 .04:#7c7c74 .14:#64645d .3:#4a4947 .5:#373635 .62:#1f1e1e .8:#191513 1:#1b1512")}
    ${grad("bodyG", 1000, 290, 770, 870, "0:#55585b .05:#8b8b84 .14:#62625b .3:#4b4a47 .45:#46494b .52:#33383e .6:#1c1b1c .8:#110f0f 1:#070606")}
    ${grad("cyl", 1727, 688, 1620, 990, "0:#595953 .08:#8b8b84 .2:#5a5853 .28:#48433f .38:#76726f .45:#626263 .55:#3f444b .62:#2a2b2f .75:#141213 1:#0c0a0a")}
    ${grad("cyl2", 1960, 885, 1900, 1060, "0:#333 .3:#2e3136 .42:#3a4048 .48:#4f5b6a .52:#2b2d31 .65:#1c1c1e .8:#121111 1:#0c0a0a")}
    ${grad("rod", 2010, 815, 1965, 940, "0:#3a322e .12:#fff5ea .3:#bdb0a8 .5:#e0d4cc .58:#7a6d68 .75:#a4958c 1:#3d3532")}
    ${grad("fl1", 720, 85, 490, 735, "0:#6a6b68 .1:#55554f .22:#3a3a38 .36:#34363a .48:#5a5f64 .54:#3f464e .6:#1f2124 .78:#17171a 1:#26211d")}
    ${grad("fl2", 840, 130, 560, 930, "0:#7b7c77 .12:#4b4a44 .2:#35332f .3:#4a4b4b .42:#5f656b .46:#23262b .62:#16161a .8:#1f1a17 1:#1c1918")}
    ${grad("flR", 2350, 775, 2115, 1450, "0:#75766f .1:#4f4f48 .2:#363430 .29:#5c5d5e .4:#6c7178 .47:#59606b .48:#191b20 .6:#1d1a18 .8:#110e0d 1:#1c1817")}
    ${grad("plate", 700, 900, 2000, 1350, "0:#5d6057 .15:#72756c .4:#60635b .7:#696c64 1:#63665e")}
    ${grad("side", 600, 950, 2100, 1450, "0:#1d2126 .05:#1c1a19 .08:#1e1917 .8:#191412 .9:#0e0d0c 1:#2a2625")}
    ${grad("earTop", 830, 960, 930, 1090, "0:#62655c 1:#8a8d84")}
    ${grad("earSide", 797, 1100, 930, 1120, "0:#20252a .3:#1c1917 .7:#2a2523 1:#0d0b0a")}
    ${grad("bolt", -16, 0, 18, 0, "0:#1e1a19 .35:#cfc4be .6:#8b7e79 1:#5b514d")}
    ${grad("foot", 600, 780, 560, 940, "0:#292624 1:#171413")}
    ${grad("ridge", 1120, 665, 1640, 1160, "0:#5c5d5b .25:#8f908f .5:#85878a .8:#777a7e 1:#55575a")}
    <clipPath id="pipeC"><path d="M138 42L400 132 640 228 510 572C400 540 340 505 250 455 160 400 110 360 37 330z"/></clipPath>
    <clipPath id="bodyC"><path d="M838 220C900 235 1000 285 1100 365 1170 420 1220 475 1270 527L1237 628C1240 720 1300 780 1350 825 1430 895 1530 960 1620 992L1862 1242C1850 1266 1830 1275 1800 1278L1735 1275 1560 1212 1035 1000 628 852 600 800z"/></clipPath>
    <clipPath id="cylC"><path d="M1270 527L1727 688 1620 990C1500 950 1400 870 1320 795 1260 730 1240 690 1235 628z"/></clipPath>
    <filter id="soft" x="-20%" y="-20%" width="140%" height="140%" color-interpolation-filters="sRGB"><feGaussianBlur stdDeviation="6"/></filter>
    <filter id="wide" x="-20%" y="-20%" width="140%" height="140%" color-interpolation-filters="sRGB"><feGaussianBlur stdDeviation="14"/></filter>
  </defs>

  <path d="M630 780L660 790 640 870 600 930 585 936z" fill="#121010"/>
  <path d="M630 852L594 920C620 985 700 1045 800 1076L920 1123 1690 1395 1815 1440C1900 1466 1960 1474 2010 1470 2060 1464 2085 1450 2100 1440L2140 1332z" fill="url(#side)" stroke="#0a0808" stroke-width="3"/>
  <path d="M630 850L1660 1235 1860 1240 2125 1330 2118 1360C2080 1390 2000 1402 1940 1398 1900 1396 1870 1390 1855 1385L1710 1335 945 1070C880 1046 850 1034 820 1018 730 970 665 910 630 850z" fill="url(#plate)" stroke="#0a0808" stroke-width="3"/>

  <path d="M1560 930L2225 1100 2155 1300 2135 1335 1855 1240 1700 1150z" fill="#0b0807"/>
  <path d="M1725 725L2275 928 2200 1166 1625 968 1665 850z" fill="url(#cyl2)"/>
  <path d="M1640 965L2190 1158" stroke="#000" stroke-width="3"/>
  <path d="M1757 760L2244 928 2210 1020 1734 856z" fill="url(#rod)" stroke="#0a0808" stroke-width="4"/>
  <path d="M1740 805L2225 970" stroke="#fff" stroke-width="3" stroke-dasharray="5 3"/>
  <path d="M1732 735L2248 918" stroke="#0a0808" stroke-width="12"/>
  <path d="M1732 738l28 10-34 108-30-10z" fill="#0a0808"/><path d="M1710 798l26 8-3 14-28-8z" fill="#45413f"/>
  <path d="M1788 775c4 30 44 34 46 8l-12-14z" fill="#120f0e"/><path d="M2162 906c4 34 42 38 44 12l-10-12z" fill="#120f0e"/>
  <path d="M1718 722l20 8-43 116-18 6z" fill="#4a4b4c" stroke="#0a0808" stroke-width="3"/>

  <g clip-path="url(#bodyC)">
    <path d="M580 200H1900V1300H580z" fill="url(#bodyG)"/>
    <path d="M900 240C1050 310 1180 410 1265 535L1240 630 1245 700C1180 600 1000 420 820 330z" fill="#7a7a72" opacity=".6" filter="url(#wide)"/>
    <path d="M845 225C950 250 1100 350 1270 530" fill="none" stroke="#7c8288" stroke-width="14" filter="url(#soft)"/>
    <path d="M810 325C900 370 1000 430 1060 470 1130 530 1190 590 1235 620L1200 640C1100 560 950 440 790 400z" fill="#3a3936" opacity=".6" filter="url(#soft)"/>
    <path d="M790 420C950 470 1130 590 1240 740L1330 850 1120 670C1000 590 880 530 750 470z" fill="#5d5d58" opacity=".6" filter="url(#wide)"/>
    <path d="M1237 628L1250 720C1330 850 1480 930 1625 990L1870 1250 1790 1285 1640 1160C1450 950 1280 800 1080 650z" fill="#46474a" filter="url(#soft)"/>
    <path d="M735 560C900 600 1000 640 1120 730L1640 1170 1560 1210 1035 1000 620 860 560 800 640 700z" fill="#111011" filter="url(#soft)"/>
    <path d="M730 490C900 540 1020 620 1100 680 1250 780 1400 910 1500 1020L1650 1170" fill="none" stroke="#464e57" stroke-width="16" filter="url(#soft)"/>
    <path d="M735 485C860 515 960 560 1060 628 1170 705 1290 800 1390 890" fill="none" stroke="#6b7580" stroke-width="5" opacity=".7"/>
    <path d="M1060 690C1220 800 1420 950 1630 1175" fill="none" stroke="#25262a" stroke-width="34" filter="url(#soft)"/>
    <path d="M1120 665C1180 720 1210 750 1260 778L1330 840C1450 945 1560 1060 1645 1148L1636 1152C1555 1074 1440 964 1320 856 1260 808 1200 765 1160 712z" fill="url(#ridge)"/>
    <path d="M1110 655C1160 700 1220 745 1265 780L1245 780C1200 750 1150 700 1110 655z" fill="#bdbdb8"/>
    <path d="M1130 690L1225 775 1180 740z" fill="#4f504e"/>
    <path d="M1270 770C1380 880 1520 960 1610 1010" fill="none" stroke="#626c77" stroke-width="14" filter="url(#soft)"/>
    <path d="M1640 1010C1700 1090 1780 1170 1850 1240" fill="none" stroke="#2a2b2e" stroke-width="44" filter="url(#wide)"/>
    <path d="M1140 820C1300 920 1480 1050 1610 1160" fill="none" stroke="#1b2335" stroke-width="10" filter="url(#soft)"/>
    <path d="M1150 945L1300 1010 1480 1080 1800 1278 1735 1275 1560 1212z" fill="#18191c" filter="url(#soft)"/>
    <path d="M1400 1070L1500 1110 1660 1190 1800 1275 1740 1275 1600 1220z" fill="#3f4043" filter="url(#soft)"/>
    <path d="M1155 950L1390 1060 1660 1190 1795 1270" fill="none" stroke="#66696c" stroke-width="3"/>
    <path d="M1660 1190L1800 1272" stroke="#85878a" stroke-width="7"/>
    <path d="M1180 960L1390 1058M1500 1115L1700 1225M1390 1100L1560 1180 1700 1255" fill="none" stroke="#8a8c8c" stroke-width="2" stroke-dasharray="5 4"/>
    <path d="M1635 1150C1645 1165 1660 1180 1668 1196L1640 1182C1640 1170 1636 1160 1620 1150z" fill="#0b0a0a"/>
    <path d="M1770 1215C1800 1215 1840 1225 1862 1240 1850 1266 1830 1275 1800 1278z" fill="#4b4c4b" opacity=".8" filter="url(#soft)"/>
    <path d="M840 572L872 576C910 600 955 640 992 674 960 664 925 640 905 622L845 584z" fill="#a9a5a5"/><path d="M888 596C905 618 925 634 948 648" stroke="#333" stroke-width="5" fill="none"/>
    <path d="M772 398L800 402 850 435 830 432 772 410z" fill="#a5a7aa"/>
    <path d="M668 706C800 760 980 850 1150 945" fill="none" stroke="#232323" stroke-width="3"/>
    <path d="M690 590L640 780" stroke="#000" stroke-width="20" opacity=".5"/>
  </g>
  <path d="M838 220C900 235 1000 285 1100 365 1170 420 1220 475 1270 527L1237 628C1240 720 1300 780 1350 825M1620 992L1862 1242C1850 1266 1830 1275 1800 1278M628 852L1035 1000 1560 1212 1735 1275" fill="none" stroke="#0a0808" stroke-width="4"/>

  <g clip-path="url(#cylC)">
    <path d="M1200 500H1760V1000H1200z" fill="url(#cyl)"/>
    <path d="M1235 644L1690 804" stroke="#f2f2f2" stroke-width="7"/>
    <path d="M1245 708L1680 858" stroke="#4a5563" stroke-width="10"/>
  </g>
  <path d="M1270 527L1727 688 1620 990C1500 950 1400 870 1320 795 1260 730 1240 690 1235 628z" fill="none" stroke="#0a0808" stroke-width="4"/>

  <g clip-path="url(#pipeC)">
    <path d="M0 0H700V600H0z" fill="url(#pipe)"/>
    <path d="M130 90C300 160 450 260 620 300L560 440C420 330 280 200 110 160z" fill="#4e4e4a" opacity=".6" filter="url(#soft)"/>
    <path d="M100 155C250 180 350 330 560 440L500 600 20 340z" fill="#181413" opacity=".85" filter="url(#soft)"/>
    <path d="M230 215C300 220 370 260 400 320 420 350 440 370 450 385L380 370C330 300 270 290 230 215z" fill="#3a3936" opacity=".8" filter="url(#soft)"/>
    <path d="M250 280L330 300 400 380 480 430 540 470 440 420 360 385z" fill="#24252a" filter="url(#soft)"/>
    <path d="M110 120l36 8" stroke="#ddd" stroke-width="6"/><path d="M102 174l28 6" stroke="#c6c6c6" stroke-width="7" stroke-dasharray="10 5"/>
    <path d="M100 158C140 165 180 200 240 235" fill="none" stroke="#5a6067" stroke-width="3"/>
    <path d="M178 203L262 245M290 268L340 298M360 322L400 345 450 385" fill="none" stroke="#9a958c" stroke-width="2" stroke-dasharray="8 6"/>
    <path d="M508 424l14 6M526 432l16 5" stroke="#b8b8b8" stroke-width="10"/>
    <path d="M528 332L560 342 590 354 550 350z" fill="#aaa"/>
  </g>
  <path d="M640 228L400 132 138 42 37 330C110 360 160 400 250 455 340 505 400 540 510 572" fill="none" stroke="#0a0808" stroke-width="4"/>

  <path d="M697 250L735 140 755 155 660 400 580 600 560 640 600 540z" fill="#0a0808"/>
  <path d="M690 80L745 97 660 350 600 540 515 742 463 723 510 572 585 370 640 230z" fill="url(#fl1)" stroke="#0a0808" stroke-width="4"/>
  <path d="M745 97L655 365 585 560 515 742 565 570 650 350 735 110z" fill="#0a0808"/>
  <path d="M607 318l45 12-6 14-45-12zM567 425l45 16-8 16-45-10z" fill="#8b9096"/>
  <path d="M728 205L815 112 780 235 610 670 590 770 535 748 565 655z" fill="#171412" stroke="#0a0808" stroke-width="3"/>
  <path d="M722 208L770 225 610 670 565 655z" fill="#231d1a"/>
  <path d="M565 655l48 16-28 96-50-19z" fill="#1b1918" stroke="#0a0808" stroke-width="3"/>
  <path d="M720 165L735 180 716 232 694 262z" fill="#fff"/><path d="M576 598L578 615 545 690 538 688z" fill="#fff"/>
  <path d="M762 95L814 112 786 193 732 180z" fill="#93958f" stroke="#0a0808" stroke-width="4"/>
  <path d="M732 180L786 193 772 222 724 208z" fill="#5a6066" stroke="#0a0808" stroke-width="3"/><path d="M736 200l36 9" stroke="#fff" stroke-width="4" stroke-dasharray="4 4"/>
  <path d="M818 130L862 145 840 222 636 792 588 770 612 668 775 240z" fill="url(#fl2)" stroke="#0a0808" stroke-width="4"/>
  <path d="M726 360l46 16-6 13-45-14z" fill="#9a9da1"/><path d="M688 472l46 16-6 13-46-14z" fill="#6b757f"/>
  <path d="M840 222L860 150" stroke="#0a0808" stroke-width="8"/>
  <path d="M585 768L632 786 585 940 532 922z" fill="url(#foot)" stroke="#0a0808" stroke-width="4"/>
  ${bolt(662, 122)}${bolt(585, 324)}${bolt(463, 670)}
  <path d="M728 138l14 5-6 22-16-6zM650 340l18 6-5 18-18-6zM535 684l16 6-8 22-16-6z" fill="#2c2826"/>

  <path d="M2246 910l20 2-60 180-26 70-6-20z" fill="#2b2b2c" stroke="#0a0808" stroke-width="3"/>
  <path d="M2325 766L2375 785 2140 1460 2090 1443 2135 1305 2215 1090 2265 910z" fill="url(#flR)" stroke="#0a0808" stroke-width="4"/>
  <path d="M2375 785L2365 800 2140 1460 2180 1310z" fill="#0a0808"/><path d="M2250 966l46 16 2 8-50-14z" fill="#fff" stroke="#ddd" stroke-width="4"/>
  <path d="M2135 1305l45 16" stroke="#0a0808" stroke-width="4"/>
  ${ear(0, 0)}${ear(892, 316)}`;

@customElement("graphics-area")
export class GraphicsArea extends LitElement {
  static styles = [base, css`
    :host { position: relative; display: grid; grid-template-columns: 1fr 26px; grid-template-rows: auto 1fr; flex: 1; min-width: 0; background: #fff; }
    .heads { grid-area: 1 / 1 / 2 / 3; display: flex; align-items: center; justify-content: center; padding: 6px 4px 0 0; gap: 8px; z-index: 1; }
    .heads button { height: 18px; }
    .heads .drop { width: 10px; padding-left: 2px; margin-left: -4px; }
    .heads .caret { border-top-color: #999; }
    .task { grid-area: 1 / 2 / 3 / 3; z-index: 1; margin-top: 23px; display: flex; flex-direction: column; border-left: 1px solid #808080; align-self: start; border-top: 1px solid #808080; }
    .task button { height: 24px; background: #d3d3d3; border-bottom: 1px solid #808080; }
    .task .on { background: #f7f7f7; }
    .model { position: absolute; left: 204px; top: 222px; }
    .triad { position: absolute; left: 27px; bottom: 38px; font: 11px "Open Sans", sans-serif; overflow: visible; }
    .handle { position: absolute; left: -1px; top: 448px; width: 9px; height: 39px; background: #f7f7f7; border: 1px solid #808080; border-left: 0; }
    .dot { width: 6px; height: 6px; border-radius: 50%; background: #c4c4c4; border: 1px solid #888; }
  `];

  render() {
    const tools: [string, string, boolean?][] = [
      ["zoomFit", "Zoom to fit"], ["zoomArea", "Zoom to area"], ["prevView", "Previous view"], ["section", "Section view"],
      ["dynAnn", "Dynamic annotation views"], ["viewOri", "View orientation", true], ["dispStyle", "Display style", true],
      ["eye", "Hide/show items", true], ["appear", "Edit appearance"], ["scene", "Apply scene", true], ["monitor", "View settings", true],
    ];
    const task = [["home", "Resources"], ["library", "Design library"], ["folderO", "File explorer"], ["palette", "View palette"], ["ball", "Appearances"], ["list", "Custom properties"], ["chat", "Forum"]];
    return html`
      <svg class="model" width="805" height="500" viewBox="0 0 2415 1500" role="img" aria-label="Part model">${model}</svg>
      <svg class="triad" width="60" height="62" viewBox="0 0 60 62" role="img" aria-label="Axes">
        <path d="M16 43L21 24" stroke="#1c5c1c" stroke-width="4"/><path d="M22 16l4 9h-8z" fill="#2f8a3a"/><path d="M17 23l8 2-2 5-6-2z" fill="#111"/>
        <path d="M16 43l-5 9" stroke="#1b1b70" stroke-width="4"/><circle cx="11" cy="52" r="4" fill="#111"/>
        <path d="M16 42l20 7" stroke="#d42020" stroke-width="3"/><path d="M36 45l8 7-10 2z" fill="#c01818"/>
        <text x="21" y="15" fill="#128a12">Y</text><text x="43" y="56" fill="#e02020">X</text><text x="4" y="62" fill="#2020e0">Z</text>
      </svg>
      <button class="handle" aria-label="Collapse tree"><span class="dot"></span></button>
      <div class="heads">
        ${tools.map(([i, l, d]) => html`<button aria-label=${l}>${icon(i)}</button>${d ? html`<button class="drop" aria-label="${l} options"><span class="caret"></span></button>` : ""}`)}
      </div>
      <div class="task">
        ${task.map(([i, l], n) => html`<button class=${n === 4 ? "on" : ""} aria-label=${l}>${icon(i, 17)}</button>`)}
      </div>`;
  }
}

/* ---------- bottom tabs and status ---------- */

@customElement("status-area")
export class StatusArea extends LitElement {
  static styles = [base, css`
    :host { display: block; color: #000; }
    .tabs { display: flex; height: 16px; background: #f7f7f7; border: solid #808080; border-width: 1px 0; }
    .nav { display: flex; margin-left: 2px; border-top: 1px solid #222; margin-top: -1px; }
    .nav button { width: 16px; background: #aaabad; border: 1px solid #8a8a8a; color: #7f8184; }
    .tab { background: #d3d3d3; border-right: 1px solid #808080; padding: 0 11px 2px; line-height: 12px; white-space: nowrap; color: #222; }
    .tab.on { background: #f7f7f7; font-weight: bold; color: #000; padding: 0 9px 2px 13px; }
    .tab:last-child { padding: 0 19px 2px 10px; }
    .status { display: flex; align-items: center; height: 18px; background: #e6e6e6; padding: 0 3px 0 1px; }
    .status .edition { flex: 1; }
    .cell { border-left: 1px solid #ccc; height: 18px; display: flex; align-items: center; }
    .gap { width: 8px; } .mode { width: 71px; padding-left: 3px; } .flag { width: 16px; }
    .units { width: 175px; padding-left: 31px; text-align: left; }
    .units span { width: 54px; }
    .up { width: 0; height: 0; border: 3px solid transparent; border-bottom-color: #333; border-top: 0; margin-right: auto; }
  `];

  render() {
    const nav = ["M3 2v8M10 2L5 6l5 4z", "M9 2L4 6l5 4z", "M4 2l5 4-5 4z", "M9 2v8M2 2l5 4-5 4z"];
    return html`
      <div class="tabs">
        <div class="nav">${nav.map((d, i) => html`<button aria-label="Tab step ${i + 1}"><svg width="12" height="12" viewBox="0 0 12 12"><path d=${d} fill="currentColor" stroke="currentColor"/></svg></button>`)}</div>
        <button class="tab on">Model</button><button class="tab">3D Views</button><button class="tab">Motion Study 1</button>
      </div>
      <div class="status">
        <span class="edition">SOLIDWORKS Premium 2016 x64 Edition</span>
        <span class="cell gap"></span>
        <span class="cell mode">Editing Part</span>
        <span class="cell flag"></span>
        <button class="cell units"><span>MMGS</span><i class="up"></i>${icon("tag", 15)}</button>
      </div>`;
  }
}

@customElement("app-root")
export class AppRoot extends LitElement {
  static styles = css`
    :host {
      display: flex; flex-direction: column; height: 100vh; box-sizing: border-box; padding-right: 2px;
      background: linear-gradient(#8f8467, #7c6c4b 30%, #8b8468 70%, #77786e);
      font: 11px/14px "Open Sans", "Noto Sans", sans-serif; color: #111;
    }
    main { display: flex; flex: 1; min-height: 0; background: #fff; }
  `;

  render() {
    return html`
      <title-bar></title-bar>
      <command-manager></command-manager>
      <main>
        <feature-tree></feature-tree>
        <graphics-area></graphics-area>
      </main>
      <status-area></status-area>`;
  }
}
